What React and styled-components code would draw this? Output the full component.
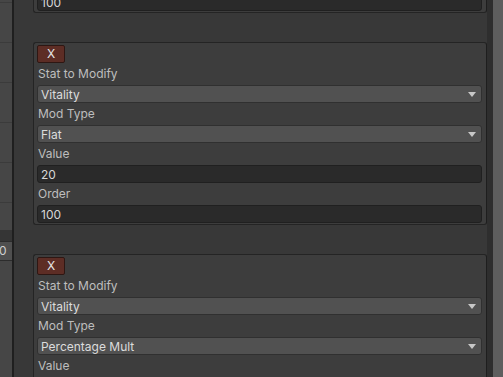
import React from 'react';
import styled, { createGlobalStyle } from 'styled-components';

const GlobalStyle = createGlobalStyle`
  html, body {
    margin: 0;
    padding: 0;
    background: #383838;
    overflow: hidden;
  }
  body {
    font-family: Inter, "Liberation Sans", sans-serif;
    font-size: 12px;
    color: #c4c4c4;
  }
`;

const modifiers = [
  { stat: 'Vitality', mod: 'Flat', value: '20', order: '100' },
  { stat: 'Vitality', mod: 'Flat', value: '20', order: '100' },
  { stat: 'Vitality', mod: 'Percentage Mult', value: '10', order: '200' },
];

const Arrow = () => (
  <svg width="8" height="5" viewBox="0 0 8 5">
    <path d="M0 0 L8 0 L4 5 Z" fill="#c8c8c8" />
  </svg>
);

const Field = ({ label, children }) => (
  <>
    <Label>{label}</Label>
    {children}
  </>
);

const ModifierCard = ({ item }) => (
  <Card>
    <RemoveButton>X</RemoveButton>
    <Field label="Stat to Modify">
      <Dropdown>
        <span>{item.stat}</span>
        <Arrow />
      </Dropdown>
    </Field>
    <Field label="Mod Type">
      <Dropdown>
        <span>{item.mod}</span>
        <Arrow />
      </Dropdown>
    </Field>
    <Field label="Value">
      <Input>{item.value}</Input>
    </Field>
    <Field label="Order">
      <Input>{item.order}</Input>
    </Field>
  </Card>
);

const App = () => {
  return (
    <Window>
      <GlobalStyle />
      <LeftStrip>
        <StripRow $h={2} />
        <StripRow />
        <StripRow />
        <StripRow />
        <StripRow />
        <StripRow />
        <StripRow $h={27} $flat />
        <StripShade />
        <StripCell>0</StripCell>
      </LeftStrip>
      <Divider />
      <Main>
        <List>
          {modifiers.map((item, i) => (
            <ModifierCard key={i} item={item} />
          ))}
        </List>
      </Main>
      <Gutter />
      <Scrollbar />
    </Window>
  );
};

export default App;

const Window = styled.div`
  display: flex;
  width: 503px;
  height: 377px;
  overflow: hidden;
  background: #383838;
`

const LeftStrip = styled.div`
  width: 12px;
  flex-shrink: 0;
  display: flex;
  flex-direction: column;
  background: #464646;
  overflow: hidden;
`

const StripRow = styled.div`
  height: ${p => p.$h ?? 39}px;
  flex-shrink: 0;
  border-bottom: ${p => (p.$flat ? 'none' : '1px solid #3b3b3b')};
`

const StripShade = styled.div`
  height: 11px;
  flex-shrink: 0;
  background: #353535;
`

const StripCell = styled.div`
  height: 18px;
  flex-shrink: 0;
  background: #4f4f4f;
  border-top: 1px solid #2c2c2c;
  border-bottom: 1px solid #2c2c2c;
  line-height: 18px;
  font-size: 12px;
  color: #d0d0d0;
  text-indent: -1px;
  overflow: hidden;
`

const Divider = styled.div`
  width: 2px;
  flex-shrink: 0;
  background: #1f1f1f;
`

const Main = styled.div`
  flex: 1;
  padding-left: 19px;
  overflow: hidden;
`

const List = styled.div`
  display: flex;
  flex-direction: column;
  gap: 29px;
  margin-top: -170px;
`

const Card = styled.div`
  display: flex;
  flex-direction: column;
  align-items: stretch;
  background: #3d3d3d;
  border: 1px solid #242424;
  border-right-color: #1e1e1e;
  border-radius: 3px;
  padding: 2px 4px 1px 3px;
`

const RemoveButton = styled.div`
  width: 28px;
  height: 18px;
  box-sizing: border-box;
  background: #5d2d25;
  border: 1px solid #2e1713;
  border-radius: 2px;
  color: #e6e6e6;
  font-size: 12px;
  line-height: 16px;
  text-align: center;
`

const Label = styled.div`
  height: 22px;
  line-height: 22px;
  padding-left: 1px;
  color: #bdbdbd;
  white-space: nowrap;
`

const Dropdown = styled.div`
  height: 18px;
  box-sizing: border-box;
  display: flex;
  align-items: center;
  justify-content: space-between;
  padding: 0 5px 0 3px;
  background: #515151;
  border: 1px solid #303030;
  border-radius: 3px;
  color: #dcdcdc;
  white-space: nowrap;
`

const Input = styled.div`
  height: 18px;
  box-sizing: border-box;
  display: flex;
  align-items: center;
  padding: 0 3px;
  background: #2a2a2a;
  border: 1px solid #202020;
  border-radius: 3px;
  color: #d6d6d6;
`

const Gutter = styled.div`
  width: 6px;
  flex-shrink: 0;
  background: #2e2e2e;
`

const Scrollbar = styled.div`
  width: 10px;
  flex-shrink: 0;
  background: #5e5e5e;
`
